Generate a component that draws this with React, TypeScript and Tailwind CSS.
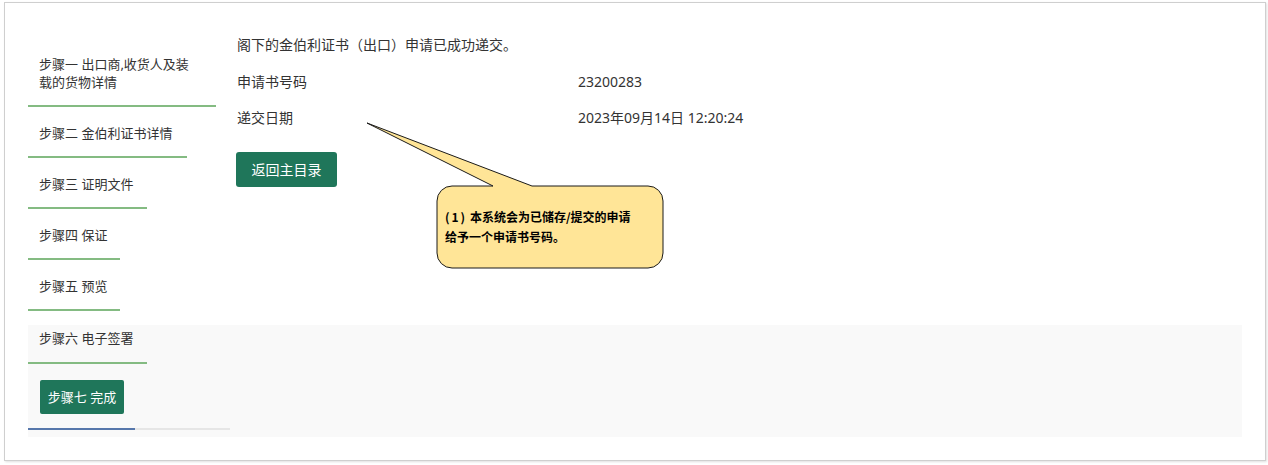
import React from "react";

const font = { fontFamily: '"Noto Sans", "Noto Sans CJK SC", sans-serif' };

function Step({ w, children }: { w: string; children: React.ReactNode }) {
  return (
    <div
      className={`${w} pl-[11px] pt-[10px] pb-[14px] border-b-2 border-[#84bb82] text-[13px] leading-[18px] text-[#333333]`}
    >
      {children}
    </div>
  );
}

export default function App() {
  return (
    <div className="relative w-[1268px] h-[465px] bg-white pl-[4px] pt-[2px]" style={font}>
      <div className="relative w-[1262px] h-[459px] border border-[#cfcfcf] shadow-[1px_1px_2px_rgba(0,0,0,0.12)] bg-white">
        <div className="flex h-[322px] pl-[23px]">
          <div className="w-[202px] pt-[42px] flex flex-col items-start gap-[7px]">
            <Step w="w-[188px]">
              步骤一 出口商,收货人及装
              <br />
              载的货物详情
            </Step>
            <Step w="w-[159px]">步骤二 金伯利证书详情</Step>
            <Step w="w-[119px]">步骤三 证明文件</Step>
            <Step w="w-[92px]">步骤四 保证</Step>
            <Step w="w-[92px]">步骤五 预览</Step>
          </div>
          <div className="ml-[7px] pt-[32px] text-[14px] leading-[20px] text-[#333333]">
            <p>阁下的金伯利证书（出口）申请已成功递交。</p>
            <div className="flex mt-[17px]">
              <div className="w-[341px]">申请书号码</div>
              <div>23200283</div>
            </div>
            <div className="flex mt-[16px]">
              <div className="w-[341px]">递交日期</div>
              <div>2023年09月14日 12:20:24</div>
            </div>
            <button className="mt-[24px] w-[101px] h-[35px] rounded-[3px] bg-[#1f765a] text-white text-[14px] leading-[20px] ml-[-1px]">
              返回主目录
            </button>
          </div>
        </div>
        <div className="ml-[23px] w-[1214px] h-[112px] bg-[#f9f9f9]">
          <div className="w-[119px] pl-[11px] pt-[4px] pb-[15px] border-b-2 border-[#84bb82] text-[13px] leading-[18px] text-[#333333]">
            步骤六 电子签署
          </div>
          <div className="w-[202px] pt-[16px]">
            <div className="pl-[12px] pb-[14px]">
              <div className="w-[84px] h-[34px] rounded-[2px] bg-[#1f765a] text-white text-[13px] leading-[34px] text-center">
                步骤七 完成
              </div>
            </div>
            <div className="flex">
              <div className="w-[107px] h-[2px] bg-[#5677ab]" />
              <div className="w-[95px] h-[2px] bg-[#e6e6e6]" />
            </div>
          </div>
        </div>
      </div>

      <svg
        className="absolute left-[360px] top-[115px] pointer-events-none"
        width="310"
        height="160"
        viewBox="0 0 310 160"
      >
        <path
          d="M 92 71 L 133 71 L 7 8 L 172 71 L 288 71 A 15 15 0 0 1 303 86 L 303 138 A 15 15 0 0 1 288 153 L 92 153 A 15 15 0 0 1 77 138 L 77 86 A 15 15 0 0 1 92 71 Z"
          fill="#ffe597"
          stroke="#1a1a1a"
          strokeWidth="1"
          strokeLinejoin="miter"
        />
      </svg>
      <div
        className="absolute left-[445px] top-[207px] text-[12px] leading-[20px] font-bold text-black whitespace-nowrap"
        style={{ fontFamily: '"Noto Sans CJK SC", sans-serif' }}
      >
        <span className="tracking-[2px]">(1)</span> 本系统会为已储存/提交的申请
        <br />
        给予一个申请书号码。
      </div>
    </div>
  );
}
